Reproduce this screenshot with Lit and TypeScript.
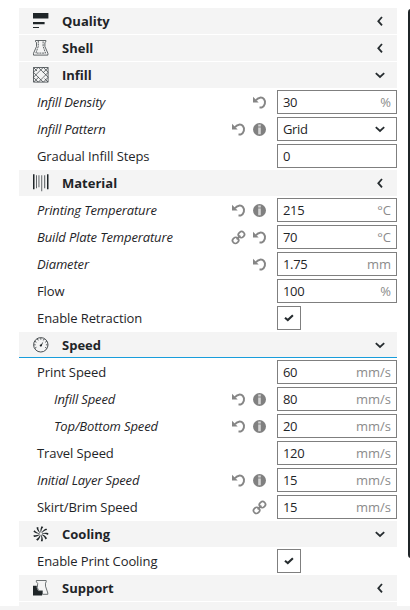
import { LitElement, html, css, svg, nothing } from "lit";
import { customElement, property } from "lit/decorators.js";

type Mark = "reset" | "info" | "link";

interface Category {
  kind: "category";
  name: string;
  icon: string;
  open?: boolean;
  active?: boolean;
}

interface Setting {
  kind: "setting";
  name: string;
  value?: string;
  unit?: string;
  control?: "text" | "select" | "check";
  marks?: Mark[];
  child?: boolean;
}

const rows: (Category | Setting)[] = [
  { kind: "category", name: "Quality", icon: "quality" },
  { kind: "category", name: "Shell", icon: "shell" },
  { kind: "category", name: "Infill", icon: "infill", open: true },
  { kind: "setting", name: "Infill Density", value: "30", unit: "%", marks: ["reset"] },
  { kind: "setting", name: "Infill Pattern", value: "Grid", control: "select", marks: ["reset", "info"] },
  { kind: "setting", name: "Gradual Infill Steps", value: "0" },
  { kind: "category", name: "Material", icon: "material" },
  { kind: "setting", name: "Printing Temperature", value: "215", unit: "°C", marks: ["reset", "info"] },
  { kind: "setting", name: "Build Plate Temperature", value: "70", unit: "°C", marks: ["link", "reset"] },
  { kind: "setting", name: "Diameter", value: "1.75", unit: "mm", marks: ["reset"] },
  { kind: "setting", name: "Flow", value: "100", unit: "%" },
  { kind: "setting", name: "Enable Retraction", control: "check" },
  { kind: "category", name: "Speed", icon: "speed", open: true, active: true },
  { kind: "setting", name: "Print Speed", value: "60", unit: "mm/s" },
  { kind: "setting", name: "Infill Speed", value: "80", unit: "mm/s", marks: ["reset", "info"], child: true },
  { kind: "setting", name: "Top/Bottom Speed", value: "20", unit: "mm/s", marks: ["reset", "info"], child: true },
  { kind: "setting", name: "Travel Speed", value: "120", unit: "mm/s" },
  { kind: "setting", name: "Initial Layer Speed", value: "15", unit: "mm/s", marks: ["reset", "info"] },
  { kind: "setting", name: "Skirt/Brim Speed", value: "15", unit: "mm/s", marks: ["link"] },
  { kind: "category", name: "Cooling", icon: "cooling", open: true },
  { kind: "setting", name: "Enable Print Cooling", control: "check" },
  { kind: "category", name: "Support", icon: "support" },
];

const blades = [0, 40, 80, 120, 160, 200, 240, 280, 320];
const ticks = [-120, -90, -60, -30, 0, 30, 60, 90, 120];

const categoryIcons: Record<string, unknown> = {
  quality: svg`<path fill="#1f2528" d="M0 0h15.400v5.600H0zM0 9h11.600v2.200H0zM0 14h6v1H0z"/>`,
  shell: svg`<g fill="none" stroke="#3c4245" stroke-width=".8">
    <path d="M2.500.5h10.400v1.200l-1 .8v4l3 6.800v1.800H.5v-1.800l3-6.800v-4l-1-.8z"/>
    <path stroke-dasharray="2 .7" d="M5.300.8v5.500L2.900 13.100h9.600L10.100 6.300V.8"/></g>`,
  infill: svg`<g fill="none" stroke="#40464a" stroke-width=".8">
    <path d="M.5.5h14.600v14.600H.5z"/>
    <path d="M5.200.5.500 5.200M10.200.5.500 10.200M15.100.7.700 15.100M15.100 5.400 5.400 15.100M15.100 10.400l-4.700 4.700M10.400.5l4.700 4.700M5.400.5l9.700 9.700M.5.5l3.500 3.500M11.600 11.600l3.500 3.500M.5 5.400l9.700 9.700M.5 10.400l4.700 4.700"/>
    <path fill="#f4f4f4" stroke="none" d="M7.800 3.700l4.100 4.100-4.100 4.100-4.100-4.100z"/></g>`,
  material: svg`<path fill="#1f2528" d="M0-.8h1.500v15H0zM14-.8h1.500v15H14z"/>
    <path fill="#52575a" d="M3 .2h.9v13H3zM5.500.2h.9v12h-.9zM8.300.2h.9v16h-.9zM11.200.2h1v13h-1z"/>`,
  speed: svg`<circle cx="7.800" cy="7.800" r="7.200" fill="none" stroke="#353b3e" stroke-width=".9"/>
    ${ticks.map((a) => svg`<path d="M7.800 1v1.700" stroke="#353b3e" stroke-width=".8" transform="rotate(${a} 7.800 7.800)"/>`)}
    <path d="M7 9 10.300 4.600 8.500 9.200z" fill="#1f2528"/><circle cx="7.700" cy="8.500" r="1" fill="#1f2528"/>`,
  cooling: svg`${blades.map((a) => svg`<path d="M7.700 6.600C7.200 5 7.300 2.300 8.500.2l1.800.7C8.900 2.300 8.300 4.500 8.100 6.600z" fill="#1f2528" transform="rotate(${a} 7.800 7.800)"/>`)}`,
  support: svg`<path fill="#1f2528" d="M0 5.700h3.800v2.400l1.500 3h3.800v4.300H0z"/>
    <path fill="none" stroke="#4a5053" stroke-width=".8" d="M3.400.5h9.800v1.300l-.7 1.400v3l2.300 6.800v1.300H9.500v-3.500H5.700L4.300 7.600 4.700 3.500 3.400 1.800z"/>`,
};

const markIcons: Record<Mark, unknown> = {
  reset: svg`<path fill="none" stroke="#868686" stroke-width="2" d="M3 4.200C5 1.300 9 .6 11 3.200c2 2.500 1.100 6.900-2.400 8.400H6.500"/>
    <path fill="#858585" d="M0 .8v5.700h5.700z"/>`,
  info: svg`<circle cx="6.500" cy="6.500" r="6.500" fill="#808080"/>
    <path fill="#d4d4d4" d="M5.200 1.500h2.600v2H5.200zM5.200 4.400h2.600v6.800H5.200z"/>`,
  link: svg`<g fill="none" stroke="#858585" stroke-width="1.700" transform="rotate(-45 6.500 6.500)">
    <rect x="-.7" y="3.700" width="6.200" height="5.600" rx="2.700"/>
    <rect x="7.500" y="3.700" width="6.200" height="5.600" rx="2.700"/>
    <path d="M3.800 6.500h5.400"/></g>`,
};

const chevron = (open: boolean) => html`<svg class="chevron" viewBox="0 0 10 10">
  <path fill="none" stroke="#262c2f" stroke-width="1.800"
    d=${open ? "M.8 3.200 5 7l4.200-3.800" : "M7 1 3.300 5.200 7 9.400"} /></svg>`;

@customElement("setting-category")
class SettingCategory extends LitElement {
  @property({ attribute: false }) item!: Category;

  static styles = css`
    :host { display: block; height: 26px; background: #f4f4f4; }
    .bar {
      display: flex; align-items: center; box-sizing: border-box;
      height: 26px; padding: 0 12px 0 14px;
    }
    .active { box-shadow: inset 0 -1px #189ddb; }
    .icon { width: 16px; height: 16px; margin-right: 13px; overflow: visible; }
    .name { flex: 1; font-weight: 700; line-height: 26px; }
    .chevron { width: 10px; height: 10px; }
  `;

  render() {
    const { name, icon, open, active } = this.item;
    return html`<div class="bar ${active ? "active" : ""}">
      <svg class="icon" viewBox="0 0 16 16">${categoryIcons[icon]}</svg>
      <span class="name">${name}</span>${chevron(!!open)}
    </div>`;
  }
}

@customElement("setting-row")
class SettingRow extends LitElement {
  @property({ attribute: false }) item!: Setting;

  static styles = css`
    :host { display: block; height: 26px; }
    .row { display: flex; align-items: center; height: 26px; padding-left: 18px; }
    .child { padding-left: 35px; }
    .name { flex: 1; white-space: nowrap; letter-spacing: -0.09px; }
    .changed { font-style: italic; letter-spacing: -0.14px; }
    .marks { display: flex; gap: 8px; margin-right: 11px; }
    .mark { width: 13px; height: 13px; display: block; overflow: visible; }
    .slot { width: 120px; display: flex; }
    .field {
      box-sizing: border-box; width: 120px; height: 24px; padding: 0 5px;
      border: 1px solid #7f7f7f; background: #fff;
      display: flex; align-items: center; justify-content: space-between;
    }
    .value { letter-spacing: -0.35px; }
    .select { padding-right: 11px; }
    .check { width: 24px; padding: 0; justify-content: center; }
    .unit { color: #8b8b8b; }
    .chevron { width: 10px; height: 10px; }
    .tick { width: 10px; height: 8px; margin-right: 1px; }
  `;

  control() {
    const { control = "text", value, unit } = this.item;
    if (control === "check")
      return html`<div class="field check"><svg class="tick" viewBox="0 0 10 8">
        <path fill="none" stroke="#262c2f" stroke-width="2.100" d="M1 3.700 3.800 6.100 8.900 1.300"/></svg></div>`;
    if (control === "select")
      return html`<div class="field select"><span class="value">${value}</span>${chevron(true)}</div>`;
    return html`<div class="field"><span class="value">${value}</span>${unit ? html`<span class="unit">${unit}</span>` : nothing}</div>`;
  }

  render() {
    const { name, marks = [], child } = this.item;
    return html`<div class="row ${child ? "child" : ""}">
      <span class="name ${marks.includes("reset") ? "changed" : ""}">${name}</span>
      <div class="marks">${marks.map((m) => html`<svg class="mark" viewBox="0 0 13 13">${markIcons[m]}</svg>`)}</div>
      <div class="slot">${this.control()}</div>
    </div>`;
  }
}

@customElement("app-root")
class AppRoot extends LitElement {
  static styles = css`
    :host {
      display: flex; flex-direction: column; height: 610px; overflow: hidden;
      background: #fff; color: #1f2528;
      font: 13px/18px "Open Sans", "Noto Sans", sans-serif;
    }
    .view { height: 606px; display: flex; overflow: hidden; }
    .list {
      width: 378px; margin: 8px 11px 0 19px; flex: none;
      display: flex; flex-direction: column; gap: 1px;
    }
    .list > * { flex: none; }
    .next { height: 26px; background: #f4f4f4; }
    .scroll { width: 6px; height: 549px; margin-top: 9px; flex: none; border-radius: 3px; background: #1f2528; }
    .footer { height: 4px; background: #f4f4f4; }
  `;

  render() {
    return html`
      <div class="view">
        <div class="list">
          ${rows.map((r) =>
            r.kind === "category"
              ? html`<setting-category .item=${r}></setting-category>`
              : html`<setting-row .item=${r}></setting-row>`
          )}
          <div class="next"></div>
        </div>
        <div class="scroll"></div>
      </div>
      <div class="footer"></div>
    `;
  }
}
